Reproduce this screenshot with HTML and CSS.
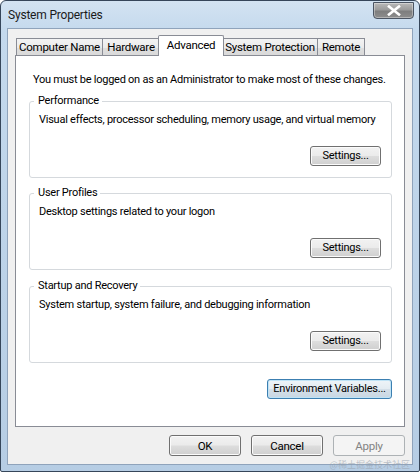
FILE: index.html
```html
<!DOCTYPE html>
<html lang="en">
<head>
<meta charset="utf-8">
<title>System Properties</title>
<link rel="stylesheet" href="styles.css">
</head>
<body>
<div class="window">
  <div class="titlebar">
    <span class="title">System Properties</span>
    <button class="close" aria-label="Close">
      <svg width="14" height="11" viewBox="0 0 14 11"><path d="M2 1.5 L12 9.5 M12 1.5 L2 9.5" stroke="#fff" stroke-width="2.6" stroke-linecap="square" fill="none"/></svg>
    </button>
  </div>
  <div class="client">
    <div class="tabs">
      <div class="tab tab-computer">Computer Name</div>
      <div class="tab tab-hardware">Hardware</div>
      <div class="tab tab-active">Advanced</div>
      <div class="tab tab-protection">System Protection</div>
      <div class="tab tab-remote">Remote</div>
    </div>
    <div class="panel">
      <p class="note">You must be logged on as an Administrator to make most of these changes.</p>
      <fieldset class="group">
        <legend>Performance</legend>
        <p class="desc">Visual effects, processor scheduling, memory usage, and virtual memory</p>
        <div class="group-actions"><button class="btn btn-settings">Settings...</button></div>
      </fieldset>
      <fieldset class="group">
        <legend>User Profiles</legend>
        <p class="desc">Desktop settings related to your logon</p>
        <div class="group-actions"><button class="btn btn-settings">Settings...</button></div>
      </fieldset>
      <fieldset class="group group-last">
        <legend>Startup and Recovery</legend>
        <p class="desc">System startup, system failure, and debugging information</p>
        <div class="group-actions"><button class="btn btn-settings">Settings...</button></div>
      </fieldset>
      <div class="env-row"><button class="btn btn-default btn-env">Environment Variables...</button></div>
    </div>
    <div class="footer">
      <button class="btn btn-footer">OK</button>
      <button class="btn btn-footer">Cancel</button>
      <button class="btn btn-footer" disabled>Apply</button>
    </div>
  </div>
  <span class="watermark">@稀土掘金技术社区</span>
</div>
</body>
</html>
```

FILE: styles.css
```css
* { box-sizing: border-box; }

html, body {
  margin: 0;
  padding: 0;
  background: #ffffff;
}

body {
  font-family: Roboto, "Liberation Sans", Arial, sans-serif;
  font-size: 11px;
  letter-spacing: -0.25px;
  color: #000;
}

.window {
  position: relative;
  width: 420px;
  height: 472px;
  border: 1px solid #36465a;
  border-radius: 6px 6px 2px 2px;
  background: linear-gradient(180deg, #d3e3f2 0px, #c4d9ed 30px, #b6cde4 100%);
  padding: 0 6px 6px 6px;
  display: flex;
  flex-direction: column;
}

.titlebar {
  height: 27px;
  display: flex;
  align-items: flex-start;
  justify-content: space-between;
  flex: none;
}

.title {
  margin-top: 7px;
  margin-left: 1px;
  font-size: 12px;
  letter-spacing: -0.2px;
  color: #1a1a1a;
  white-space: nowrap;
}

.close {
  margin-top: 1px;
  margin-right: -1px;
  width: 41px;
  height: 17px;
  padding: 0;
  border: 1px solid #4b5563;
  border-radius: 0 0 4px 4px;
  background: linear-gradient(180deg, #b9b9b9 0%, #9b9b9b 45%, #7e7e7e 55%, #8d8d8d 100%);
  box-shadow: inset 0 0 0 1px rgba(255,255,255,0.35);
  display: flex;
  align-items: center;
  justify-content: center;
}

.client {
  flex: 1;
  border: 1px solid #8fa3bb;
  background: #f0f0f0;
  padding: 6px 7px 8px 7px;
  display: flex;
  flex-direction: column;
}

.tabs {
  display: flex;
  align-items: flex-end;
  height: 21px;
  padding-left: 1px;
}

.tab {
  height: 18px;
  border: 1px solid #898c95;
  border-bottom: none;
  background: linear-gradient(180deg, #f3f3f3 0%, #ebebeb 50%, #dedede 51%, #d9d9d9 100%);
  padding: 0;
  margin-right: -1px;
  line-height: 17px;
  font-size: 11.5px;
  text-align: center;
  color: #000;
  white-space: nowrap;
}

.tab-computer { width: 87px; }
.tab-hardware { width: 58px; }
.tab-protection { width: 96px; }
.tab-remote { width: 48px; }

.tab-active {
  position: relative;
  z-index: 1;
  width: 66px;
  height: 21px;
  margin-left: -1px;
  margin-right: -2px;
  background: #ffffff;
  line-height: 18px;
  border-radius: 2px 2px 0 0;
}

.panel {
  margin-top: -1px;
  height: 372px;
  border: 1px solid #898c95;
  background: #ffffff;
  padding: 17px 12px 0 13px;
  display: flex;
  flex-direction: column;
}

.note {
  margin: 0 0 0 4px;
  line-height: 14px;
  white-space: nowrap;
}

.group {
  margin: 7px 0 0 0;
  height: 84px;
  border: 1px solid #d5d9dd;
  border-radius: 3px;
  padding: 5px 10px 0 9px;
  min-width: 0;
}

.group + .group { margin-top: 8px; }
.group + .group-last { margin-top: 9px; }

.group legend {
  padding: 0 3px 0 4px;
  margin-left: -5px;
  line-height: 14px;
}

.desc {
  margin: 0;
  line-height: 14px;
  white-space: nowrap;
}

.group-actions {
  margin-top: 19px;
  display: flex;
  justify-content: flex-end;
}

.btn {
  font-family: inherit;
  font-size: 11px;
  letter-spacing: -0.25px;
  color: #000;
  height: 20px;
  padding: 0 4px;
  border: 1px solid #707070;
  border-radius: 3px;
  background: linear-gradient(180deg, #f2f2f2 0%, #ebebeb 48%, #dddddd 52%, #cfcfcf 100%);
  box-shadow: inset 0 0 0 1px #fbfbfb;
  line-height: 16px;
  white-space: nowrap;
}

.btn-settings { width: 71px; }

.env-row {
  margin-top: 16px;
  display: flex;
  justify-content: flex-end;
}

.btn-env {
  width: 125px;
}

.btn-default {
  border-color: #3c7fb1;
  box-shadow: inset 0 0 0 1px #bfe3f6;
  background: linear-gradient(180deg, #eef4f8 0%, #e4ecf2 48%, #d4dfe8 52%, #c9d7e3 100%);
}

.footer {
  margin-top: 8px;
  display: flex;
  justify-content: flex-end;
  gap: 10px;
}

.btn-footer {
  width: 72px;
  height: 21px;
  font-size: 11.5px;
}

.btn:disabled {
  color: #838383;
  border-color: #adb2b5;
  background: #f4f4f4;
  box-shadow: none;
}

.watermark {
  position: absolute;
  right: 9px;
  bottom: 1px;
  font-family: "Noto Sans CJK SC", sans-serif;
  font-size: 9px;
  letter-spacing: 0;
  color: rgba(150, 160, 172, 0.6);
  line-height: 11px;
}
```
